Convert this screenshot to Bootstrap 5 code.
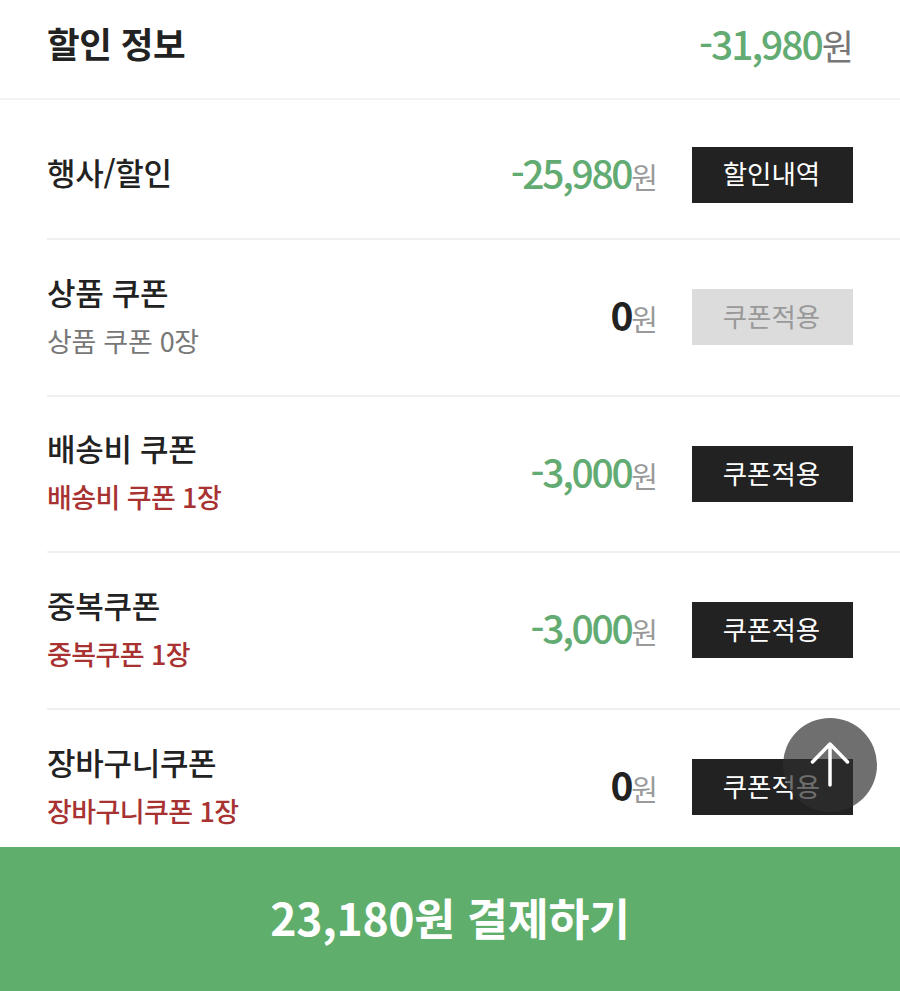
<!DOCTYPE html>
<html lang="ko">
<head>
    <meta charset="UTF-8">
    <meta name="viewport" content="width=device-width, initial-scale=1.0">
    <title>할인 정보</title>
    <link href="https://cdn.jsdelivr.net/npm/bootstrap@5.3.0/dist/css/bootstrap.min.css" rel="stylesheet">
    <style>
        html, body { height: 100%; }
        body { font-family: "Noto Sans CJK KR", "Noto Sans", sans-serif; color: #222; background: #fff; overflow: hidden; }
        .page-wrap { position: relative; width: 900px; height: 991px; overflow: hidden; }
        .sum-head { height: 100px; padding: 0 46px 12px 47px; border-bottom: 2px solid #f2f2f2; }
        .sum-title { font-size: 35.500px; font-weight: 700; letter-spacing: -.5px; margin: 0; line-height: 1; }
        .sum-amt { font-size: 39px; font-weight: 500; letter-spacing: -2px; color: #62ab72; line-height: 1; }
        .sum-amt .won { color: #777; font-size: 35px; font-weight: 400; letter-spacing: 0; }
        .row-list { margin-left: 47px; }
        .disc-row { height: 156.500px; padding-right: 47px; border-bottom: 2px solid #f0f0f0; }
        .disc-row.first { height: 140px; padding-top: 11px; }
        .disc-row.last { height: 155px; border-bottom: 0; }
        .disc-name { font-size: 31px; font-weight: 500; letter-spacing: -.3px; line-height: 38px; }
        .disc-text { padding-bottom: 5px; }
        .first .disc-name { padding-bottom: 5px; }
        .disc-sub { font-size: 27px; font-weight: 400; line-height: 32px; margin-top: 14px; color: #777; letter-spacing: -.3px; }
        .disc-sub.on { color: #a83232; font-weight: 500; letter-spacing: -.6px; }
        .disc-amt { font-size: 39px; font-weight: 500; letter-spacing: -2.300px; line-height: 1; margin: 0 34px 5px 0; color: #62ab72; }
        .disc-amt.zero { color: #222; font-weight: 700; }
        .disc-amt .won { color: #999; font-size: 29px; font-weight: 400; letter-spacing: 0; }
        .act-btn { width: 161px; height: 56px; border-radius: 0; border: 0; background: #222; color: #fff; font-size: 26.500px; font-weight: 400; line-height: 1; padding: 0 2px 2px 0; }
        .act-btn:disabled { background: #dcdcdc; color: #999; opacity: 1; }
        .pay-bar { position: absolute; left: 0; right: 0; bottom: 0; height: 144px; background: #5fae6c; color: #fff; font-size: 44.500px; font-weight: 700; letter-spacing: -.3px; border: 0; border-radius: 0; padding-bottom: 10px; }
        .top-btn { position: absolute; left: 783px; top: 718px; width: 94px; height: 94px; border-radius: 50%; background: rgba(46, 46, 46, .69); border: 0; padding: 0; }
    </style>
</head>
<body>
<div class="page-wrap">
    <div class="sum-head d-flex justify-content-between align-items-center">
        <h1 class="sum-title">할인 정보</h1>
        <div class="sum-amt">-31,980<span class="won">원</span></div>
    </div>
    <div class="row-list">
        <div class="disc-row first d-flex align-items-center">
            <div class="disc-name flex-grow-1">행사/할인</div>
            <div class="disc-amt">-25,980<span class="won">원</span></div>
            <button class="btn act-btn" type="button">할인내역</button>
        </div>
        <div class="disc-row d-flex align-items-center">
            <div class="disc-text flex-grow-1">
                <div class="disc-name">상품 쿠폰</div>
                <div class="disc-sub">상품 쿠폰 0장</div>
            </div>
            <div class="disc-amt zero">0<span class="won">원</span></div>
            <button class="btn act-btn" type="button" disabled>쿠폰적용</button>
        </div>
        <div class="disc-row d-flex align-items-center">
            <div class="disc-text flex-grow-1">
                <div class="disc-name">배송비 쿠폰</div>
                <div class="disc-sub on">배송비 쿠폰 1장</div>
            </div>
            <div class="disc-amt">-3,000<span class="won">원</span></div>
            <button class="btn act-btn" type="button">쿠폰적용</button>
        </div>
        <div class="disc-row d-flex align-items-center">
            <div class="disc-text flex-grow-1">
                <div class="disc-name">중복쿠폰</div>
                <div class="disc-sub on">중복쿠폰 1장</div>
            </div>
            <div class="disc-amt">-3,000<span class="won">원</span></div>
            <button class="btn act-btn" type="button">쿠폰적용</button>
        </div>
        <div class="disc-row last d-flex align-items-center">
            <div class="disc-text flex-grow-1">
                <div class="disc-name">장바구니쿠폰</div>
                <div class="disc-sub on">장바구니쿠폰 1장</div>
            </div>
            <div class="disc-amt zero">0<span class="won">원</span></div>
            <button class="btn act-btn" type="button">쿠폰적용</button>
        </div>
    </div>
    <button class="btn pay-bar" type="button">23,180원 결제하기</button>
    <button class="top-btn d-flex align-items-center justify-content-center" type="button" aria-label="맨 위로">
        <svg width="94" height="94" viewBox="0 0 94 94" fill="none" stroke="#fff" stroke-width="3.500" stroke-linecap="round" stroke-linejoin="round"><path d="M47 26V67M29.500 44L47 26L64.500 44"/></svg>
    </button>
</div>
<script src="https://cdn.jsdelivr.net/npm/bootstrap@5.3.0/dist/js/bootstrap.bundle.min.js"></script>
</body>
</html>
